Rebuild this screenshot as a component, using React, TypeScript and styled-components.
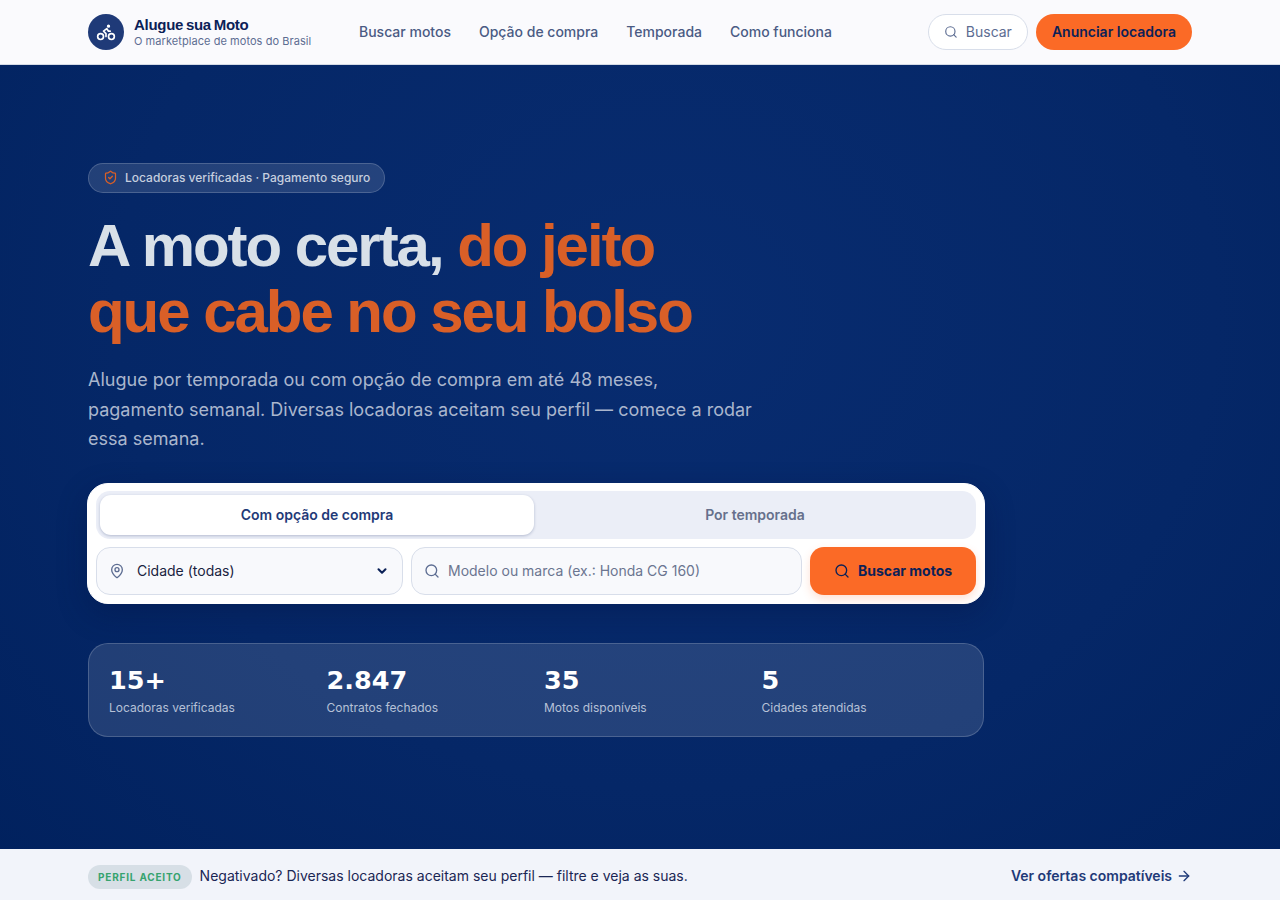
import React from "react";
import styled, { createGlobalStyle } from "styled-components";
import { ArrowRight, ChevronDown, MapPin, Search, ShieldCheck } from "lucide-react";

const GlobalStyle = createGlobalStyle`
  html, body { margin: 0; padding: 0; height: 100%; }
  body { font-family: Inter, "Liberation Sans", sans-serif; background: #f2f4fa; }
  * { box-sizing: border-box; }
`;

const HEADING_FONT = `"Liberation Sans", Arial, sans-serif`;

const Page = styled.div`
  display: flex;
  flex-direction: column;
  height: 900px;
  overflow: hidden;
`;

const Header = styled.header`
  display: flex;
  align-items: center;
  flex: 0 0 65px;
  padding: 0 88px;
  background: #fafafd;
  border-bottom: 1px solid #d5dbe6;
`;

const Brand = styled.div`
  display: flex;
  align-items: center;
  gap: 10px;
  width: 271px;
`;

const LogoBadge = styled.div`
  display: flex;
  align-items: center;
  justify-content: center;
  width: 36px;
  height: 36px;
  border-radius: 50%;
  background: #1f3a78;
`;

const BrandText = styled.div`
  display: flex;
  flex-direction: column;
`;

const BrandName = styled.span`
  font-family: ${HEADING_FONT};
  font-size: 15px;
  line-height: 17px;
  font-weight: 700;
  letter-spacing: -0.3px;
  word-spacing: -1px;
  color: #0b2157;
`;

const BrandTag = styled.span`
  font-size: 11px;
  line-height: 16px;
  letter-spacing: 0.06px;
  color: #5d6d92;
`;

const Nav = styled.nav`
  display: flex;
  gap: 28px;
  flex: 1;
  padding-bottom: 2px;
`;

const NavLink = styled.a`
  font-size: 14px;
  font-weight: 500;
  color: #4a5b84;
`;

const HeaderActions = styled.div`
  display: flex;
  align-items: center;
  gap: 8px;
`;

const SearchPill = styled.button`
  display: flex;
  align-items: center;
  gap: 8px;
  width: 100px;
  height: 36px;
  padding: 0 15px 1px;
  border: 1px solid #d8deea;
  border-radius: 18px;
  background: #fff;
  font: 400 14px Inter, sans-serif;
  color: #5d6d92;
`;

const CtaPill = styled.button`
  height: 36px;
  padding: 0 16px 2px;
  border: 0;
  border-radius: 18px;
  background: #fb6a26;
  font: 600 14px Inter, sans-serif;
  color: #0b2157;
`;

const Hero = styled.main`
  flex: 1;
  padding: 98px 88px 0;
  background: radial-gradient(ellipse 1000px 860px at 52% 32%, #082c70 0%, #052767 55%, #00205c 100%);
`;

const TrustBadge = styled.div`
  display: inline-flex;
  align-items: center;
  gap: 7px;
  height: 30px;
  padding: 0 14px 2px;
  border: 1px solid rgba(255, 255, 255, 0.18);
  border-radius: 15px;
  background: rgba(255, 255, 255, 0.12);
  font-size: 12px;
  font-weight: 500;
  color: #c6cfdf;
`;

const Title = styled.h1`
  margin: 20px 0 0;
  font-family: ${HEADING_FONT};
  font-size: 60px;
  line-height: 66px;
  font-weight: 700;
  letter-spacing: -2.05px;
  color: #d8e0e8;
`;

const Accent = styled.span`
  color: #d95f27;
`;

const Lead = styled.p`
  margin: 20px 0 0;
  max-width: 668px;
  font-size: 18px;
  line-height: 29.5px;
  letter-spacing: 0.01px;
  color: #aab6cd;
`;

const SearchCard = styled.section`
  width: 898px;
  margin: 29px 0 0 -1px;
  padding: 7px 8px 8px;
  border: 1px solid #fff;
  border-radius: 21px;
  background: #fff;
  box-shadow: 0 10px 30px rgba(0, 16, 60, 0.3);
`;

const Tabs = styled.div`
  display: grid;
  grid-template-columns: 1fr 1fr;
  gap: 4px;
  padding: 4px;
  height: 48px;
  border-radius: 14px;
  background: #ebeef7;
`;

const Tab = styled.button<{ $active?: boolean }>`
  border: 0;
  border-radius: 11px;
  background: ${(p) => (p.$active ? "#fff" : "transparent")};
  box-shadow: ${(p) => (p.$active ? "0 1px 3px rgba(15, 35, 90, 0.25)" : "none")};
  font: 600 14px Inter, sans-serif;
  color: ${(p) => (p.$active ? "#1f3a78" : "#66708c")};
`;

const SearchRow = styled.div`
  display: flex;
  gap: 8px;
  margin-top: 8px;
`;

const Field = styled.div<{ $width: number }>`
  display: flex;
  align-items: center;
  width: ${(p) => p.$width}px;
  height: 48px;
  padding: 0 13px 0 12px;
  border: 1px solid #d8deea;
  border-radius: 14px;
  background: #f8f9fc;
  font-size: 14px;
`;

const FieldValue = styled.span`
  flex: 1;
  margin-left: 12px;
  color: #1a2340;
`;

const FieldHint = styled.span`
  margin-left: 8px;
  color: #6b7590;
`;

const SearchButton = styled.button`
  display: flex;
  align-items: center;
  justify-content: center;
  gap: 8px;
  width: 166px;
  height: 48px;
  border: 0;
  border-radius: 14px;
  background: #fb6a26;
  box-shadow: 0 4px 10px rgba(251, 106, 38, 0.2);
  font: 700 14px Inter, sans-serif;
  color: #0b2157;
`;

const Stats = styled.section`
  display: grid;
  grid-template-columns: repeat(4, 1fr);
  column-gap: 16px;
  width: 896px;
  height: 94px;
  margin-top: 39px;
  padding: 20px 20px 0;
  border: 1px solid rgba(255, 255, 255, 0.18);
  border-radius: 20px;
  background: rgba(255, 255, 255, 0.12);
`;

const Stat = styled.div`
  display: flex;
  flex-direction: column;
`;

const StatValue = styled.span`
  font-family: "DejaVu Sans", ${HEADING_FONT};
  font-size: 25.5px;
  line-height: 32px;
  font-weight: 700;
  color: #fff;
`;

const StatLabel = styled.span`
  margin-top: 4px;
  font-size: 12px;
  line-height: 16px;
  color: #b6c1d7;
`;

const Strip = styled.aside`
  display: flex;
  align-items: center;
  flex: 0 0 51px;
  padding: 2px 88px 0;
  background: #f2f4fa;
`;

const StripTag = styled.span`
  display: inline-flex;
  align-items: center;
  height: 24px;
  margin-top: 2px;
  padding: 0 10px;
  border-radius: 12px;
  background: #d7dfe6;
  font-size: 10px;
  font-weight: 700;
  letter-spacing: 0.8px;
  color: #36a36f;
`;

const StripText = styled.span`
  flex: 1;
  margin-left: 8px;
  font-size: 14px;
  color: #1a2654;
`;

const StripLink = styled.a`
  display: flex;
  align-items: center;
  gap: 4px;
  font-size: 14px;
  font-weight: 600;
  color: #1f3a78;
`;

const navItems = ["Buscar motos", "Opção de compra", "Temporada", "Como funciona"];

const stats = [
  { value: "15+", label: "Locadoras verificadas" },
  { value: "2.847", label: "Contratos fechados" },
  { value: "35", label: "Motos disponíveis" },
  { value: "5", label: "Cidades atendidas" },
];

const BikeIcon = () => (
  <svg width="20" height="20" viewBox="0 0 24 24" fill="none" stroke="#fff" strokeWidth="2" strokeLinecap="round" strokeLinejoin="round">
    <circle cx="18.5" cy="17.5" r="3.5" />
    <circle cx="5.5" cy="17.5" r="3.5" />
    <circle cx="15" cy="5" r="1" />
    <path d="M12 17.5V14l-3-3 4-3 2 3h2" />
  </svg>
);

export default function App() {
  return (
    <Page>
      <GlobalStyle />
      <Header>
        <Brand>
          <LogoBadge>
            <BikeIcon />
          </LogoBadge>
          <BrandText>
            <BrandName>Alugue sua Moto</BrandName>
            <BrandTag>O marketplace de motos do Brasil</BrandTag>
          </BrandText>
        </Brand>
        <Nav>
          {navItems.map((item) => (
            <NavLink key={item}>{item}</NavLink>
          ))}
        </Nav>
        <HeaderActions>
          <SearchPill>
            <Search size={16} />
            Buscar
          </SearchPill>
          <CtaPill>Anunciar locadora</CtaPill>
        </HeaderActions>
      </Header>

      <Hero>
        <TrustBadge>
          <ShieldCheck size={15} color="#d95f27" />
          Locadoras verificadas · Pagamento seguro
        </TrustBadge>
        <Title>
          A moto certa, <Accent>do jeito</Accent>
          <br />
          <Accent>que cabe no seu bolso</Accent>
        </Title>
        <Lead>
          Alugue por temporada ou com opção de compra em até 48 meses, pagamento semanal. Diversas locadoras aceitam seu
          perfil — comece a rodar essa semana.
        </Lead>

        <SearchCard>
          <Tabs>
            <Tab $active>Com opção de compra</Tab>
            <Tab>Por temporada</Tab>
          </Tabs>
          <SearchRow>
            <Field $width={307}>
              <MapPin size={16} color="#5d6d92" />
              <FieldValue>Cidade (todas)</FieldValue>
              <ChevronDown size={14} color="#0b2157" strokeWidth={3.5} />
            </Field>
            <Field $width={391}>
              <Search size={16} color="#5d6d92" />
              <FieldHint>Modelo ou marca (ex.: Honda CG 160)</FieldHint>
            </Field>
            <SearchButton>
              <Search size={16} />
              Buscar motos
            </SearchButton>
          </SearchRow>
        </SearchCard>

        <Stats>
          {stats.map((s) => (
            <Stat key={s.label}>
              <StatValue>{s.value}</StatValue>
              <StatLabel>{s.label}</StatLabel>
            </Stat>
          ))}
        </Stats>
      </Hero>

      <Strip>
        <StripTag>PERFIL ACEITO</StripTag>
        <StripText>Negativado? Diversas locadoras aceitam seu perfil — filtre e veja as suas.</StripText>
        <StripLink>
          Ver ofertas compatíveis
          <ArrowRight size={16} />
        </StripLink>
      </Strip>
    </Page>
  );
}
